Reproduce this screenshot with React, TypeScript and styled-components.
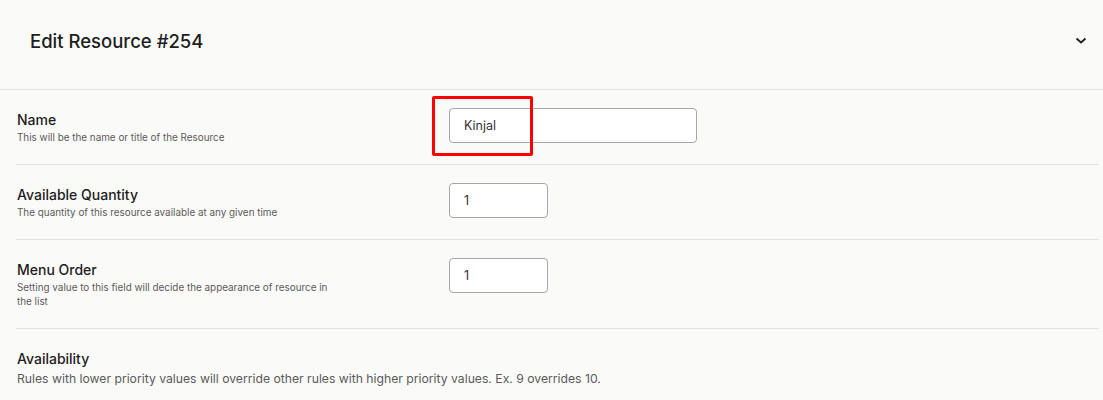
import React from 'react';
import styled, { createGlobalStyle } from 'styled-components';

const GlobalStyle = createGlobalStyle`
  body {
    margin: 0;
    background: #fafaf9;
    font-family: Inter, 'Noto Sans', sans-serif;
    color: #1e1e1e;
  }
`;

const Panel = styled.div`
  width: 1103px;
`;

const Header = styled.div`
  display: flex;
  align-items: center;
  justify-content: space-between;
  height: 90px;
  padding: 0 16px 8px 30px;
  border-bottom: 1px solid #e2e2e2;
  box-sizing: border-box;
`;

const Title = styled.h2`
  margin: 0;
  font-size: 18.5px;
  font-weight: 500;
  color: #1e1e1e;
`;

const Toggle = styled.button`
  display: flex;
  border: none;
  background: none;
  padding: 0;
  cursor: pointer;
`;

const Fields = styled.div`
  padding: 0 4px 0 16px;
`;

const Row = styled.div<{ $last?: boolean }>`
  display: grid;
  grid-template-columns: 433px 1fr;
  align-items: start;
  padding: 18px 0 ${({ $last }) => ($last ? '0' : '20px')};
  border-bottom: ${({ $last }) => ($last ? 'none' : '1px solid #e2e2e2')};
`;

const LabelBlock = styled.div<{ $wide?: boolean }>`
  margin-top: 2px;
  grid-column: ${({ $wide }) => ($wide ? '1 / -1' : 'auto')};
`;

const Label = styled.label`
  display: block;
  padding-left: 1px;
  font-size: 14px;
  line-height: 20px;
  font-weight: 500;
  color: #1e1e1e;
`;

const Help = styled.p<{ $large?: boolean }>`
  margin: ${({ $large }) => ($large ? '1px 0 0' : '0')};
  max-width: ${({ $large }) => ($large ? 'none' : '320px')};
  padding-left: 1px;
  font-size: ${({ $large }) => ($large ? '12.2px' : '9.9px')};
  line-height: ${({ $large }) => ($large ? '18px' : '14px')};
  color: #5b5b5b;
`;

const InputCell = styled.div`
  position: relative;
`;

const Input = styled.input<{ $width: number }>`
  display: block;
  box-sizing: border-box;
  width: ${({ $width }) => $width}px;
  height: 35px;
  padding: 0 14px;
  border: 1px solid #a7a7a7;
  border-radius: 4px;
  background: #fff;
  font-family: Inter, 'Noto Sans', sans-serif;
  font-size: 12.5px;
  color: #333;
  outline: none;
`;

const Highlight = styled.div`
  position: absolute;
  left: -17px;
  top: -12px;
  width: 101px;
  height: 60px;
  box-sizing: border-box;
  border: 3px solid #ff0000;
  border-radius: 2px;
  pointer-events: none;
`;

const Chevron = () => (
  <svg width="12" height="8" viewBox="0 0 12 8" fill="none">
    <path d="M1.5 1.5l4.5 4 4.5-4" stroke="#1e1e1e" strokeWidth="1.7" />
  </svg>
);

const fields = [
  {
    label: 'Name',
    help: 'This will be the name or title of the Resource',
    value: 'Kinjal',
    width: 248,
    marked: true,
  },
  {
    label: 'Available Quantity',
    help: 'The quantity of this resource available at any given time',
    value: '1',
    width: 99,
  },
  {
    label: 'Menu Order',
    help: 'Setting value to this field will decide the appearance of resource in the list',
    value: '1',
    width: 99,
  },
];

const App: React.FC = () => (
  <>
    <GlobalStyle />
    <Panel>
      <Header>
        <Title>Edit Resource #254</Title>
        <Toggle aria-label="Toggle panel">
          <Chevron />
        </Toggle>
      </Header>
      <Fields>
        {fields.map((f) => (
          <Row key={f.label}>
            <LabelBlock>
              <Label>{f.label}</Label>
              <Help>{f.help}</Help>
            </LabelBlock>
            <InputCell>
              <Input $width={f.width} defaultValue={f.value} />
              {f.marked && <Highlight />}
            </InputCell>
          </Row>
        ))}
        <Row $last>
          <LabelBlock $wide>
            <Label>Availability</Label>
            <Help $large>
              Rules with lower priority values will override other rules with higher priority
              values. Ex. 9 overrides 10.
            </Help>
          </LabelBlock>
        </Row>
      </Fields>
    </Panel>
  </>
);

export default App;
